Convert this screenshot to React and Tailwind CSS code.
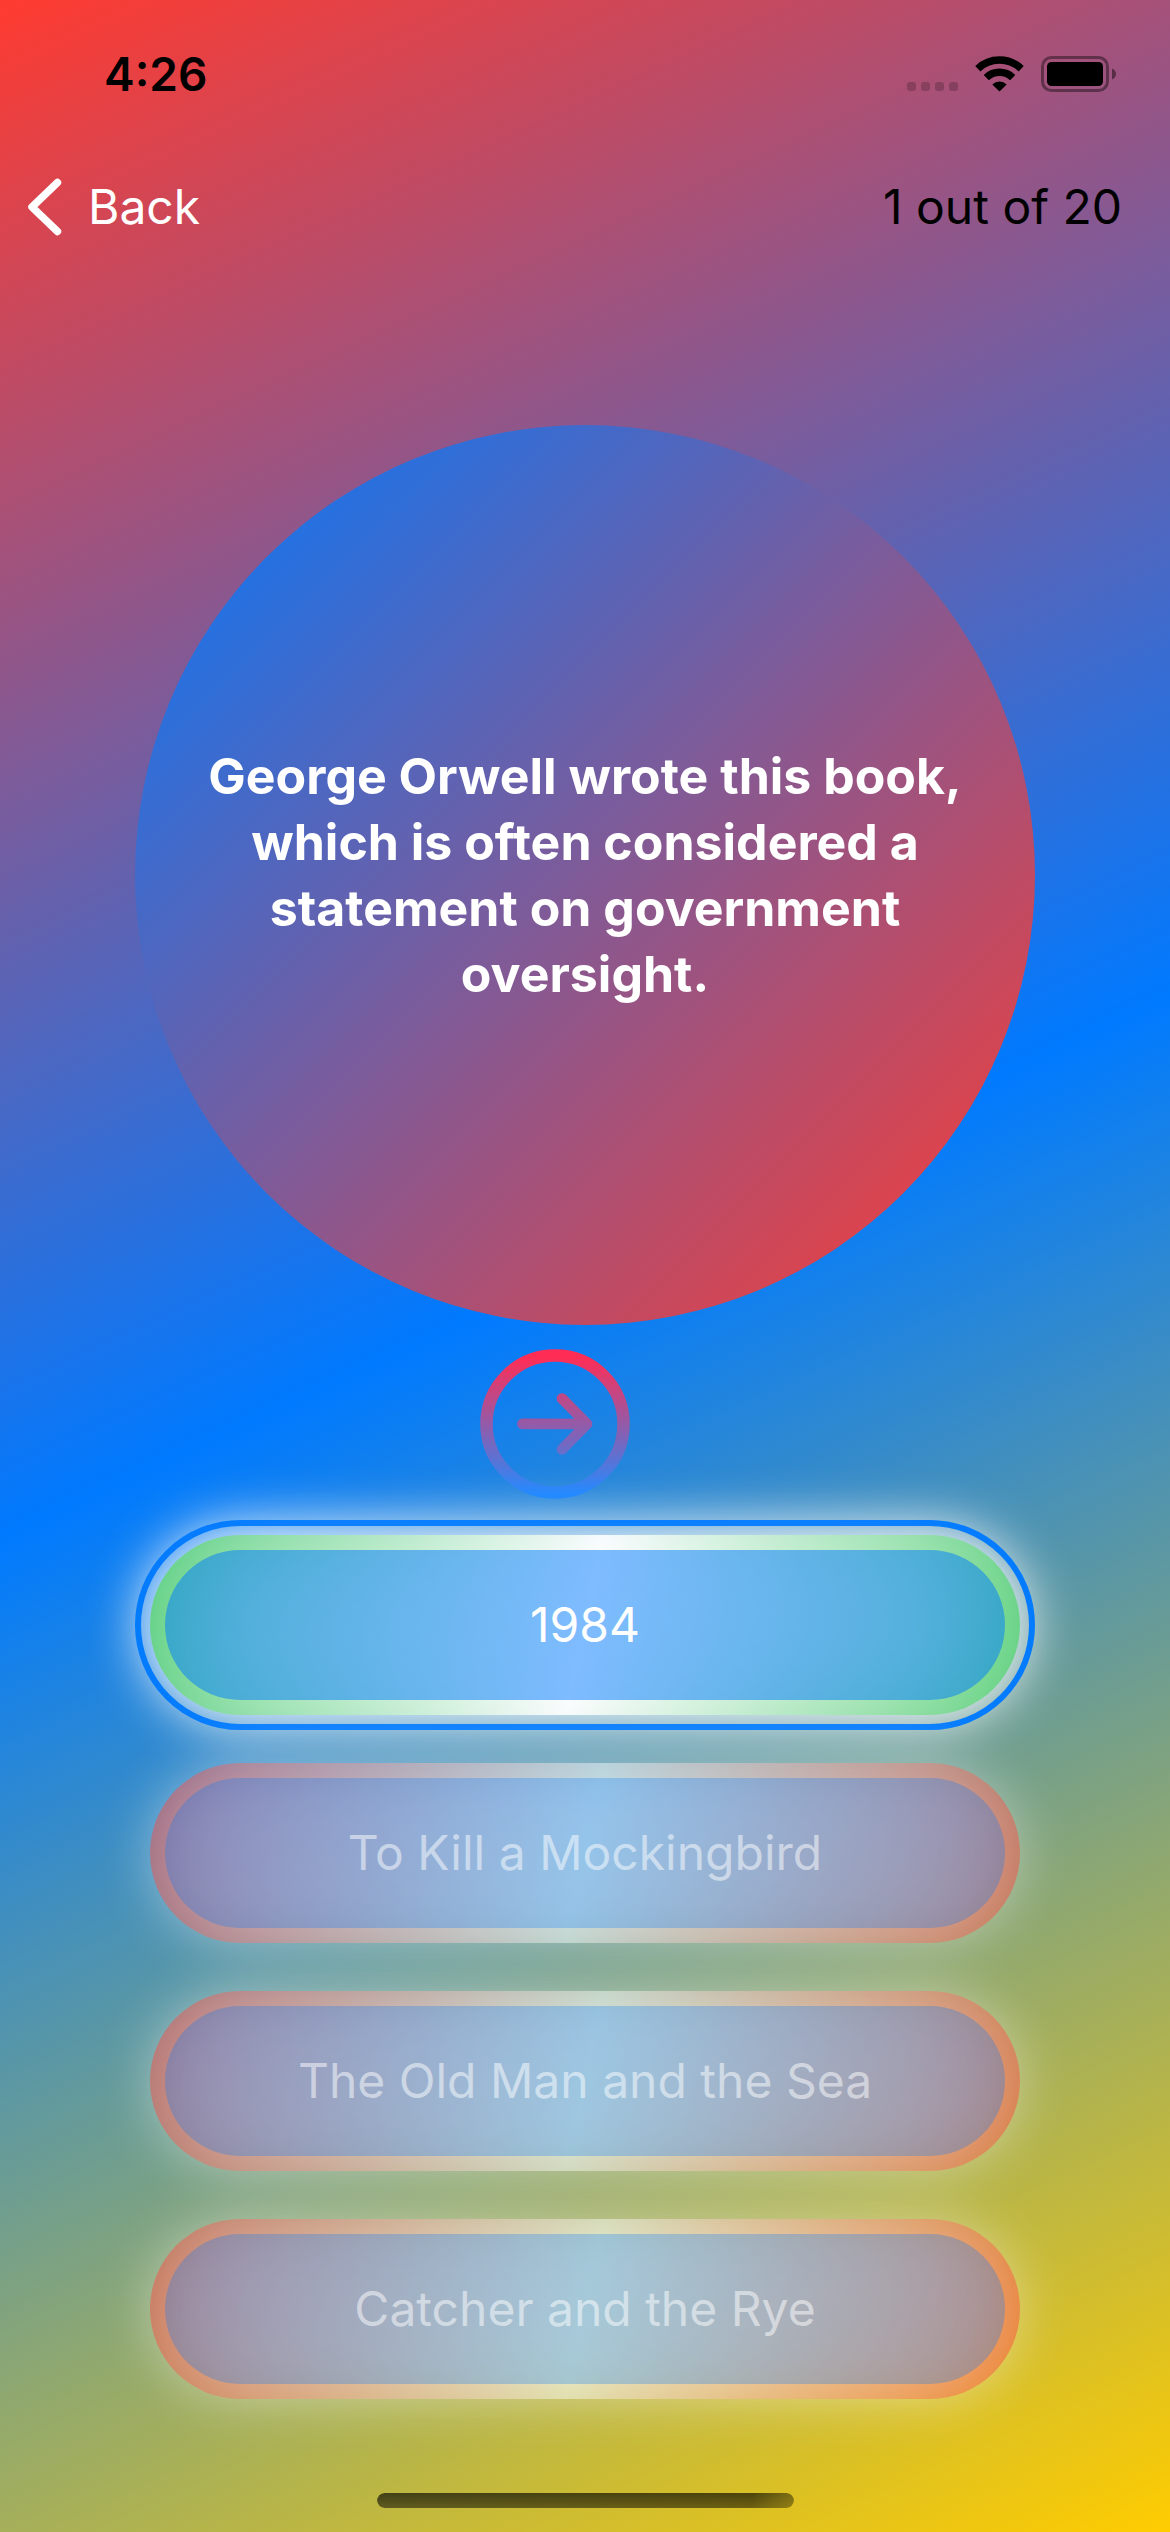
const answers = [
  { label: "1984", correct: true },
  { label: "To Kill a Mockingbird", correct: false },
  { label: "The Old Man and the Sea", correct: false },
  { label: "Catcher and the Rye", correct: false },
];

function StatusBar() {
  return (
    <div className="flex h-[140px] items-center justify-between pl-[104px] pr-[54px] pt-2">
      <span className="text-[46px] font-semibold leading-none text-black">4:26</span>
      <div className="flex items-end gap-[17px]">
        <div className="mb-px flex gap-[5px]">
          {[0, 1, 2, 3].map((i) => (
            <span key={i} className="size-[9px] rounded-[3px] bg-black/20" />
          ))}
        </div>
        <svg className="h-9 w-[49px]" viewBox="0 0 49 36" fill="none" aria-hidden="true">
          <g stroke="#000" strokeWidth="7.4">
            <path d="M2.800 12.700a31.500 31.500 0 0 1 43.400 0" />
            <path d="M11.300 21.600a19.100 19.100 0 0 1 26.400 0" />
          </g>
          <path d="M24.500 35.500l-7.200-7a10.300 10.300 0 0 1 14.400 0z" fill="#000" />
        </svg>
        <svg className="h-9 w-[75px]" viewBox="0 0 75 36" fill="none" aria-hidden="true">
          <rect x="1.5" y="1.5" width="65" height="33" rx="9" stroke="#000" strokeOpacity="0.4" strokeWidth="3" />
          <rect x="6" y="6" width="56" height="24" rx="4.5" fill="#000" />
          <path d="M71 12.500c2.500 1 4 3 4 5.500s-1.500 4.500-4 5.500z" fill="#000" fillOpacity="0.45" />
        </svg>
      </div>
    </div>
  );
}

function NavBar() {
  return (
    <header className="flex h-[133px] items-center justify-between pl-[27px] pr-[48px]">
      <button type="button" className="flex items-center gap-[25px] text-[48px] leading-none text-white">
        <svg className="h-[58px] w-9" viewBox="0 0 36 58" fill="none" aria-hidden="true">
          <path d="M30.500 4.500L5 29l25.500 24.500" stroke="currentColor" strokeWidth="7.500" strokeLinecap="round" strokeLinejoin="round" />
        </svg>
        Back
      </button>
      <p className="text-[48px] leading-none text-black">1 out of 20</p>
    </header>
  );
}

function NextButton() {
  return (
    <button type="button" aria-label="Next question" className="relative z-10 mr-[60px] mt-6 size-[150px] rounded-full">
      <svg className="size-full" viewBox="0 0 150 150" fill="none" aria-hidden="true">
        <defs>
          <linearGradient id="next" gradientUnits="userSpaceOnUse" x1="0" y1="8" x2="0" y2="145">
            <stop offset="0" stopColor="#ff2d55" />
            <stop offset="1" stopColor="#248aff" />
          </linearGradient>
        </defs>
        <circle cx="75" cy="75" r="68.500" stroke="url(#next)" strokeWidth="12.500" />
        <path d="M42.500 74.900L107 75M82 49.500L107 75L82 100.500" stroke="url(#next)" strokeWidth="10.700" strokeLinecap="round" strokeLinejoin="round" />
      </svg>
    </button>
  );
}

function Answer({ label, correct }) {
  return (
    <button
      type="button"
      className={
        "relative isolate h-[180px] rounded-full text-[48px] " +
        (correct ? "text-white" : "text-white/50")
      }
    >
      <span
        className={
          "absolute -z-30 rounded-full blur-[26px] " +
          (correct ? "-inset-[10px] bg-white/90" : "inset-0 bg-white/40")
        }
      />
      {correct && <span className="absolute -inset-[15px] -z-20 rounded-full border-6 border-[#007aff]" />}
      <span
        className={
          "absolute inset-0 -z-20 rounded-full " +
          (correct
            ? "bg-[linear-gradient(101.7deg,#5bd279,#fff,#5bd279)] opacity-90"
            : "bg-[linear-gradient(101.7deg,#ff3b30,#fff,#ff3b30)] opacity-45")
        }
      />
      <span
        className={
          "absolute inset-x-12 inset-y-6 -z-20 rounded-full blur-2xl " +
          (correct ? "bg-white/25" : "bg-white/10")
        }
      />
      <span
        className={
          "absolute inset-[15px] -z-10 rounded-full " +
          (correct ? "bg-[#007aff]/50" : "bg-[#007aff]/28")
        }
      />
      {label}
    </button>
  );
}

export default function App() {
  return (
    <div className="flex min-h-screen flex-col overflow-hidden bg-[linear-gradient(155.2deg,#ff3b30,#007aff,#ffcc00)] font-['Inter','Liberation_Sans',sans-serif]">
      <StatusBar />
      <NavBar />
      <main className="flex flex-1 flex-col items-center px-[135px] pt-[152px]">
        <div className="flex aspect-square w-full items-center justify-center rounded-full bg-[linear-gradient(135deg,#007aff,#ff3b30)] px-[60px]">
          <h1 className="text-center text-[50px] font-bold leading-[66px] text-white">
            George Orwell wrote this book, which is often considered a statement on government oversight.
          </h1>
        </div>
        <NextButton />
        <div className="mt-9 flex w-full flex-col gap-12 px-[15px]">
          {answers.map((a) => (
            <Answer key={a.label} {...a} />
          ))}
        </div>
      </main>
      <footer className="flex justify-center pb-6">
        <div className="h-[15px] w-[417px] rounded-full bg-linear-to-b from-black/65 to-black/50 mask-r-from-90% mask-r-to-120%" />
      </footer>
    </div>
  );
}
